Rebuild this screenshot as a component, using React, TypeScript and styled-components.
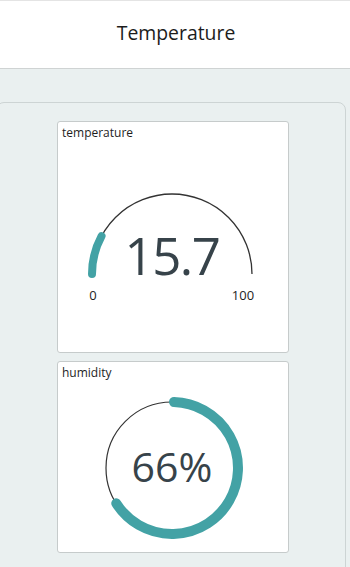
import { FC } from "react";
import styled, { createGlobalStyle } from "styled-components";

const GlobalStyle = createGlobalStyle`
  html, body {
    margin: 0;
    padding: 0;
    background: #eaf0f0;
    font-family: "Open Sans", "Noto Sans", sans-serif;
    overflow: hidden;
  }
`;

const TEAL = "#43a2a5";
const INK = "#37434a";

const Header = styled.header`
  height: 67px;
  background: #ffffff;
  border-top: 1px solid #e4e4e4;
  border-bottom: 1px solid #cfd3d3;
  display: flex;
  align-items: center;
  justify-content: center;
`;

const Title = styled.h1`
  margin: 0 0 4px 2px;
  font-size: 19.4px;
  font-weight: 400;
  color: #1c1c1c;
`;

const Panel = styled.main`
  margin: 33px 4px 0 -4px;
  padding: 18px 0 40px;
  border: 1px solid #cdd4d4;
  border-radius: 8px;
  display: flex;
  flex-direction: column;
  align-items: center;
  gap: 8px;
`;

const Card = styled.section<{ $height: number }>`
  width: 230px;
  height: ${({ $height }) => $height}px;
  margin-left: 4px;
  background: #ffffff;
  border: 1px solid #c6cbcb;
  border-radius: 3px;
  display: flex;
  flex-direction: column;
`;

const CardTitle = styled.div`
  padding: 2px 4px 0;
  height: 18px;
  font-size: 12px;
  line-height: 18px;
  color: #1e1e1e;
`;

const Chart = styled.svg`
  display: block;
  flex: 1;
  width: 230px;
`;

const Value = styled.text<{ $size: number }>`
  font-size: ${({ $size }) => $size}px;
  fill: ${INK};
  text-anchor: middle;
`;

const Label = styled.text`
  font-size: 13px;
  fill: #1e1e1e;
  text-anchor: middle;
`;

const Gauge: FC<{ value: number; min: number; max: number }> = ({ value, min, max }) => {
  const cx = 114;
  const cy = 132;
  const r = 80;
  const a = (((value - min) / (max - min)) * 180 * Math.PI) / 180;
  const ex = cx - r * Math.cos(a);
  const ey = cy - r * Math.sin(a);
  return (
    <Chart viewBox="0 0 230 210">
      <path
        d={`M ${cx - r} ${cy} A ${r} ${r} 0 0 1 ${cx + r} ${cy}`}
        fill="none"
        stroke="#333"
        strokeWidth={1.3}
      />
      <path
        d={`M ${cx - r} ${cy} A ${r} ${r} 0 0 1 ${ex} ${ey}`}
        fill="none"
        stroke={TEAL}
        strokeWidth={8}
        strokeLinecap="round"
      />
      <Value x={cx} y={cy + 1} $size={51} letterSpacing={-1.5}>
        {value}
      </Value>
      <Label x={35} y={158}>
        {min}
      </Label>
      <Label x={185} y={158}>
        {max}
      </Label>
    </Chart>
  );
};

const Ring: FC<{ percent: number }> = ({ percent }) => {
  const cx = 114;
  const cy = 86;
  const r = 66;
  const a = (percent / 100) * 2 * Math.PI;
  const ex = cx + r * Math.sin(a);
  const ey = cy - r * Math.cos(a);
  const large = percent > 50 ? 1 : 0;
  return (
    <Chart viewBox="0 0 230 170">
      <circle cx={cx} cy={cy} r={r} fill="none" stroke="#333" strokeWidth={1.2} />
      <path
        d={`M ${cx + 2} ${cy - r} A ${r} ${r} 0 ${large} 1 ${ex} ${ey}`}
        fill="none"
        stroke={TEAL}
        strokeWidth={10}
        strokeLinecap="round"
      />
      <Value x={cx} y={100} $size={41}>
        {percent}%
      </Value>
    </Chart>
  );
};

export default function App() {
  return (
    <>
      <GlobalStyle />
      <Header>
        <Title>Temperature</Title>
      </Header>
      <Panel>
        <Card $height={230}>
          <CardTitle>temperature</CardTitle>
          <Gauge value={15.7} min={0} max={100} />
        </Card>
        <Card $height={190}>
          <CardTitle>humidity</CardTitle>
          <Ring percent={66} />
        </Card>
      </Panel>
    </>
  );
}
